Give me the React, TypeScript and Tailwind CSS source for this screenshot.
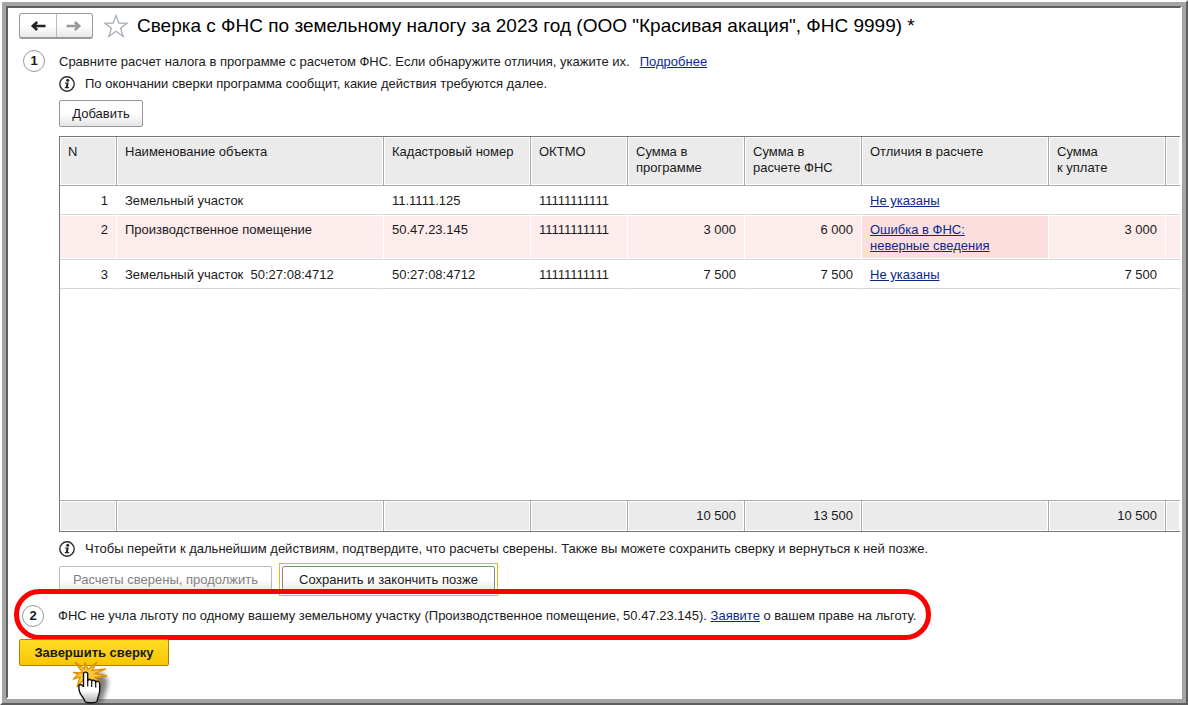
import { useState, type ReactNode } from "react";

type Row = {
  n: number;
  name: string;
  cadastre: string;
  oktmo: string;
  program: string;
  fns: string;
  diff: string[];
  due: string;
  error?: boolean;
};

const rows: Row[] = [
  { n: 1, name: "Земельный участок", cadastre: "11.1111.125", oktmo: "11111111111", program: "", fns: "", diff: ["Не указаны"], due: "" },
  { n: 2, name: "Производственное помещение", cadastre: "50.47.23.145", oktmo: "11111111111", program: "3 000", fns: "6 000", diff: ["Ошибка в ФНС:", "неверные сведения"], due: "3 000", error: true },
  { n: 3, name: "Земельный участок  50:27:08:4712", cadastre: "50:27:08:4712", oktmo: "11111111111", program: "7 500", fns: "7 500", diff: ["Не указаны"], due: "7 500" },
];

const headers = [["N"], ["Наименование объекта"], ["Кадастровый номер"], ["ОКТМО"], ["Сумма в", "программе"], ["Сумма в", "расчете ФНС"], ["Отличия в расчете"], ["Сумма", "к уплате"], []];
const totals = ["", "", "", "", "10 500", "13 500", "", "10 500", ""];

function Arrow({ back }: { back?: boolean }) {
  return (
    <svg width="16" height="12" viewBox="0 0 16 12" fill="none" stroke={back ? "#222" : "#999"} strokeWidth="2.600" aria-hidden="true">
      {back ? <path d="M15.500 6H3M7.200 2 2.800 6l4.400 4" /> : <path d="M.5 6H13M8.800 2l4.400 4-4.400 4" />}
    </svg>
  );
}

function Info() {
  return (
    <svg width="16" height="16" viewBox="0 0 16 16" className="shrink-0" aria-hidden="true">
      <circle cx="8" cy="8" r="7.200" fill="#fff" stroke="#2b2b2b" strokeWidth="1.400" />
      <circle cx="8.700" cy="4.300" r="1.500" fill="#222" />
      <path d="M6 6.400h3.700l-.8 4.500h1.200l-.2 1.300H5.700l.2-1.300h.9l.6-3.300H5.800z" fill="#222" />
    </svg>
  );
}

function Step({ n }: { n: number }) {
  return (
    <span className="flex size-[22px] shrink-0 items-center justify-center rounded-full border border-[#999] text-[13px] font-bold">{n}</span>
  );
}

function Link({ children }: { children: ReactNode }) {
  return (
    <a href="#" className="text-[#0c2a8c] underline underline-offset-1">{children}</a>
  );
}

function Pointer() {
  return (
    <svg width="50" height="44" viewBox="0 0 50 44" className="pointer-events-none absolute top-[22px] left-[52px]" aria-hidden="true">
      <defs>
        <linearGradient id="hand" x1="0" y1="0" x2="0" y2="1">
          <stop offset="0.6" stopColor="#fff" />
          <stop offset="1" stopColor="#aaa" />
        </linearGradient>
        <filter id="blur" x="-40%" y="-40%" width="180%" height="180%">
          <feGaussianBlur stdDeviation="2.500" />
        </filter>
      </defs>
      <path d="M19 12h13l5 8-2 10-4 11H18z" fill="#000" opacity="0.5" filter="url(#blur)" />
      <path d="M12 12 4 1l9.500 7L14 1l3 7.500L26 1l-5 8.500L35 8l-11 4.500L36 15l-12 1.500L30 22l-11-4-6 0-7 8 3-10-7 2.500 5-5L2 11.500z" fill="#ffc640" stroke="#dc9000" strokeWidth="1.300" />
      <path d="M12.500 25V13.200c0-2.800 4.200-2.800 4.200 0V20c.3-2 3.800-2 4 .3 .4-1.700 3.700-1.500 4 .8 .6-1.500 4-1 4 1.200V29c0 4-2 7-2.400 10.500-.2 3-12 3-12.600.3-.6-3-4.200-5-5.200-9.300-.8-3.500-1.200-7 .8-7 1.700 0 2.400 1 3.200 2.500z" fill="url(#hand)" stroke="#111" strokeWidth="1.400" />
      <path d="M16.700 19v6.500M20.700 20v6M24.700 21v5.500" stroke="#111" strokeWidth="1.200" fill="none" />
    </svg>
  );
}

const button = "flex h-[27px] items-center justify-center rounded-[2px] border bg-linear-to-b from-white from-50% to-[#e4e4e4]";

export default function App() {
  const [favorite, setFavorite] = useState(false);
  return (
    <div className="min-h-screen border-2 border-t-white border-r-[#5e5e5e] border-b-[#5e5e5e] border-l-white bg-white font-['Liberation_Sans',Arial,sans-serif] text-[13px] leading-4 text-[#1a1a1a]">
      <div className="border-4 border-[#a5a5a5]">
        <main className="border-2 border-t-[#5e5e5e] border-r-white border-b-white border-l-[#5e5e5e] pt-1 pb-[31px] pl-[11px]">
          <header className="flex h-[28px] items-center">
            <div className="flex h-[26px] w-[74px] shrink-0 overflow-hidden rounded-[3px] border border-b-2 border-[#999] bg-linear-to-b from-white from-50% to-[#e8e8e8]">
              <button aria-label="Назад" className="flex flex-1 items-center justify-center border-r border-[#bbb]"><Arrow back /></button>
              <button aria-label="Вперед" className="flex flex-1 items-center justify-center"><Arrow /></button>
            </div>
            <button aria-label="Избранное" aria-pressed={favorite} onClick={() => setFavorite(!favorite)} className="ml-[11px]">
              <svg width="24" height="24" viewBox="0 0 24 24" fill={favorite ? "#f8cf2c" : "#fff"} stroke="#a3abb5" strokeWidth="1.200" aria-hidden="true">
                <path d="m12 1.500 2.800 7.700h8.200l-6.500 5 2.700 8.300-7.200-5.200-7.200 5.200 2.700-8.300-6.500-5h8.200z" />
              </svg>
            </button>
            <h1 className="ml-[9px] text-[19px] leading-6 text-black">Сверка с ФНС по земельному налогу за 2023 год (ООО "Красивая акация", ФНС 9999) *</h1>
          </header>

          <section className="mt-[10px] flex items-start gap-[14px] pl-1">
            <Step n={1} />
            <div className="min-w-0 flex-1">
              <p className="mt-1 flex gap-[10px]"><span>Сравните расчет налога в программе с расчетом ФНС. Если обнаружите отличия, укажите их.</span><Link>Подробнее</Link></p>
              <p className="mt-[6px] flex items-center gap-[10px]"><Info />По окончании сверки программа сообщит, какие действия требуются далее.</p>
              <button className={`${button} mt-2 w-[84px] border-[#999]`}>Добавить</button>

              <table className="mt-[9px] w-full table-fixed border-separate border-spacing-0 border-y border-l border-[#777] text-left">
                <colgroup>
                  <col className="w-[57px]" />
                  <col />
                  <col className="w-[147px]" />
                  <col className="w-[97px]" />
                  <col className="w-[117px]" />
                  <col className="w-[117px]" />
                  <col className="w-[187px]" />
                  <col className="w-[117px]" />
                  <col className="w-[14px]" />
                </colgroup>
                <thead>
                  <tr className="h-[49px]">
                    {headers.map((lines, i) => (
                      <th key={i} className="border-r border-b border-[#aaa] bg-[#ebebeb] px-2 pt-[7px] align-top font-normal whitespace-nowrap shadow-[inset_0_0_0_1px_white] last:border-r-0">
                        {lines.map((line) => <div key={line}>{line}</div>)}
                      </th>
                    ))}
                  </tr>
                </thead>
                <tbody>
                  {rows.map((row) => {
                    const cell = `border-b border-b-[#d5d5d5] border-r ${row.error ? "border-r-white shadow-[inset_0_1px_0_0_white,inset_0_-1px_0_0_white]" : "border-r-transparent"} px-2 pt-[7px] pb-[5px] align-top whitespace-pre last:border-r-0`;
                    const tint = row.error ? "bg-[#fcecec]" : "";
                    return (
                      <tr key={row.n}>
                        <td className={`${cell} ${tint} text-right`}>{row.n}</td>
                        <td className={`${cell} ${tint}`}>{row.name}</td>
                        <td className={`${cell} ${tint}`}>{row.cadastre}</td>
                        <td className={`${cell} ${tint}`}>{row.oktmo}</td>
                        <td className={`${cell} ${tint} text-right`}>{row.program}</td>
                        <td className={`${cell} ${tint} text-right`}>{row.fns}</td>
                        <td className={`${cell} ${row.error ? "bg-[#fcdede]" : ""}`}>
                          <Link>{row.diff.join("\n")}</Link>
                        </td>
                        <td className={`${cell} ${tint} text-right`}>{row.due}</td>
                        <td className={`${cell} ${tint}`} />
                      </tr>
                    );
                  })}
                  <tr className="h-[211px]"><td colSpan={9} /></tr>
                </tbody>
                <tfoot>
                  <tr className="h-[31px]">
                    {totals.map((total, i) => (
                      <td key={i} className="border-t border-r border-[#aaa] bg-[#ebebeb] px-2 text-right shadow-[inset_0_0_0_1px_white] last:border-r-0">{total}</td>
                    ))}
                  </tr>
                </tfoot>
              </table>

              <p className="mt-[9px] flex items-center gap-[10px]"><Info />Чтобы перейти к дальнейшим действиям, подтвердите, что расчеты сверены. Также вы можете сохранить сверку и вернуться к ней позже.</p>
              <div className="mt-[6px] flex items-center gap-[7px]">
                <button disabled className={`${button} w-[213px] border-[#bbb] text-[#808080]`}>Расчеты сверены, продолжить</button>
                <div className="border border-[#f5b21a] p-[2px]">
                  <button className={`${button} w-[213px] border-[#888]`}>Сохранить и закончить позже</button>
                </div>
              </div>
            </div>
          </section>

          <section className="relative mt-[9px] flex w-max items-center gap-[14px] pr-2 pl-[3px]">
            <Step n={2} />
            <p>ФНС не учла льготу по одному вашему земельному участку (Производственное помещение, 50.47.23.145). <Link>Заявите</Link> о вашем праве на льготу.</p>
            <div className="pointer-events-none absolute -top-4 -right-[7px] -bottom-[13px] -left-[5px] rounded-full border-5 border-[#ff0000]" />
          </section>

          <div className="relative mt-3 w-max">
            <button className="flex h-[27px] w-[150px] items-center justify-center rounded-[2px] border border-[#a88700] bg-linear-to-b from-[#ffdd22] to-[#f8c600] font-bold">Завершить сверку</button>
            <Pointer />
          </div>
        </main>
      </div>
    </div>
  );
}
